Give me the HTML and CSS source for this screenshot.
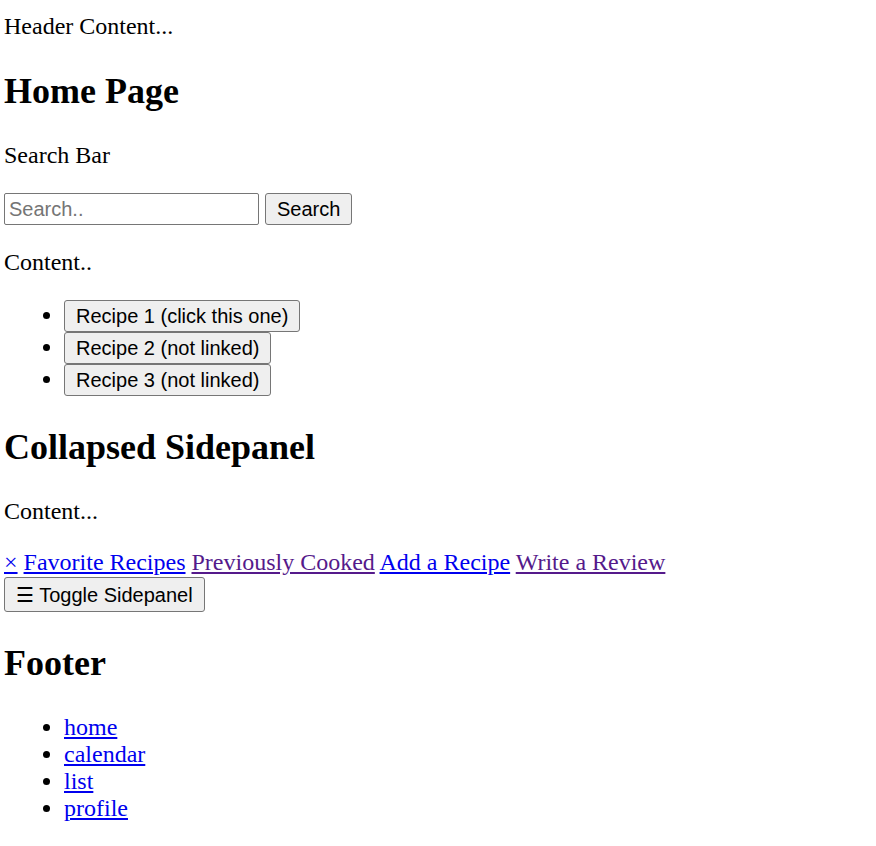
FILE: index.html
```html
<!DOCTYPE html>
<html>
<head>
<meta charset="utf-8">
<title>Home</title>
<link rel="stylesheet" href="styles.css">
</head>
<body>
<div class="header"><p class="first">Header Content...</p></div>
<section>
<h1>Home Page</h1>
<p>Search Bar</p>
<div class="searchbar"><input class="field" type="text" placeholder="Search.."> <button class="btn">Search</button></div>
<p>Content..</p>
<ul class="recipes">
<li><button class="btn">Recipe 1 (click this one)</button></li>
<li><button class="btn">Recipe 2 (not linked)</button></li>
<li><button class="btn">Recipe 3 (not linked)</button></li>
</ul>
</section>
<section>
<h1>Collapsed Sidepanel</h1>
<p>Content...</p>
<div class="sidepanel"><a href="#" class="link">×</a> <a href="#" class="link">Favorite Recipes</a> <a href="#" class="link visited">Previously Cooked</a> <a href="#" class="link">Add a Recipe</a> <a href="#" class="link visited">Write a Review</a></div>
<div><button class="btn btn-toggle">☰ Toggle Sidepanel</button></div>
</section>
<section>
<h1>Footer</h1>
<ul class="footer-links">
<li><a href="#" class="link">home</a></li>
<li><a href="#" class="link">calendar</a></li>
<li><a href="#" class="link">list</a></li>
<li><a href="#" class="link">profile</a></li>
</ul>
</section>
</body>
</html>
```
FILE: styles.css
```css
html { background: #fff; }
body {
  margin: 0 4px;
  font-family: "Liberation Serif", "Times New Roman", serif;
  font-size: 24px;
  color: #000;
}
p { margin: 24px 0; }
.first { margin-top: 13px; }
h1 {
  font-size: 36px;
  font-weight: bold;
  margin: 30px 0;
}
ul { margin: 24px 0; padding-left: 60px; }
.btn {
  font-family: "Liberation Sans", Arial, sans-serif;
  font-size: 20px;
  color: #000;
  background: #efefef;
  border: 1px solid #767676;
  border-radius: 3px;
  padding: 3px 11px;
  height: 32px;
  box-sizing: border-box;
  line-height: normal;
}
.btn-toggle {
  height: 35px;
  margin-top: 1px;
}
.field {
  font-family: "Liberation Sans", Arial, sans-serif;
  font-size: 20px;
  width: 255px;
  height: 32px;
  box-sizing: border-box;
  border: 1px solid #767676;
  border-radius: 2px;
  padding: 1px 4px;
  margin: 0;
}
.field::placeholder { color: #757575; }
.link { color: #0000ee; text-decoration: underline; }
.link.visited { color: #551a8b; }
```
